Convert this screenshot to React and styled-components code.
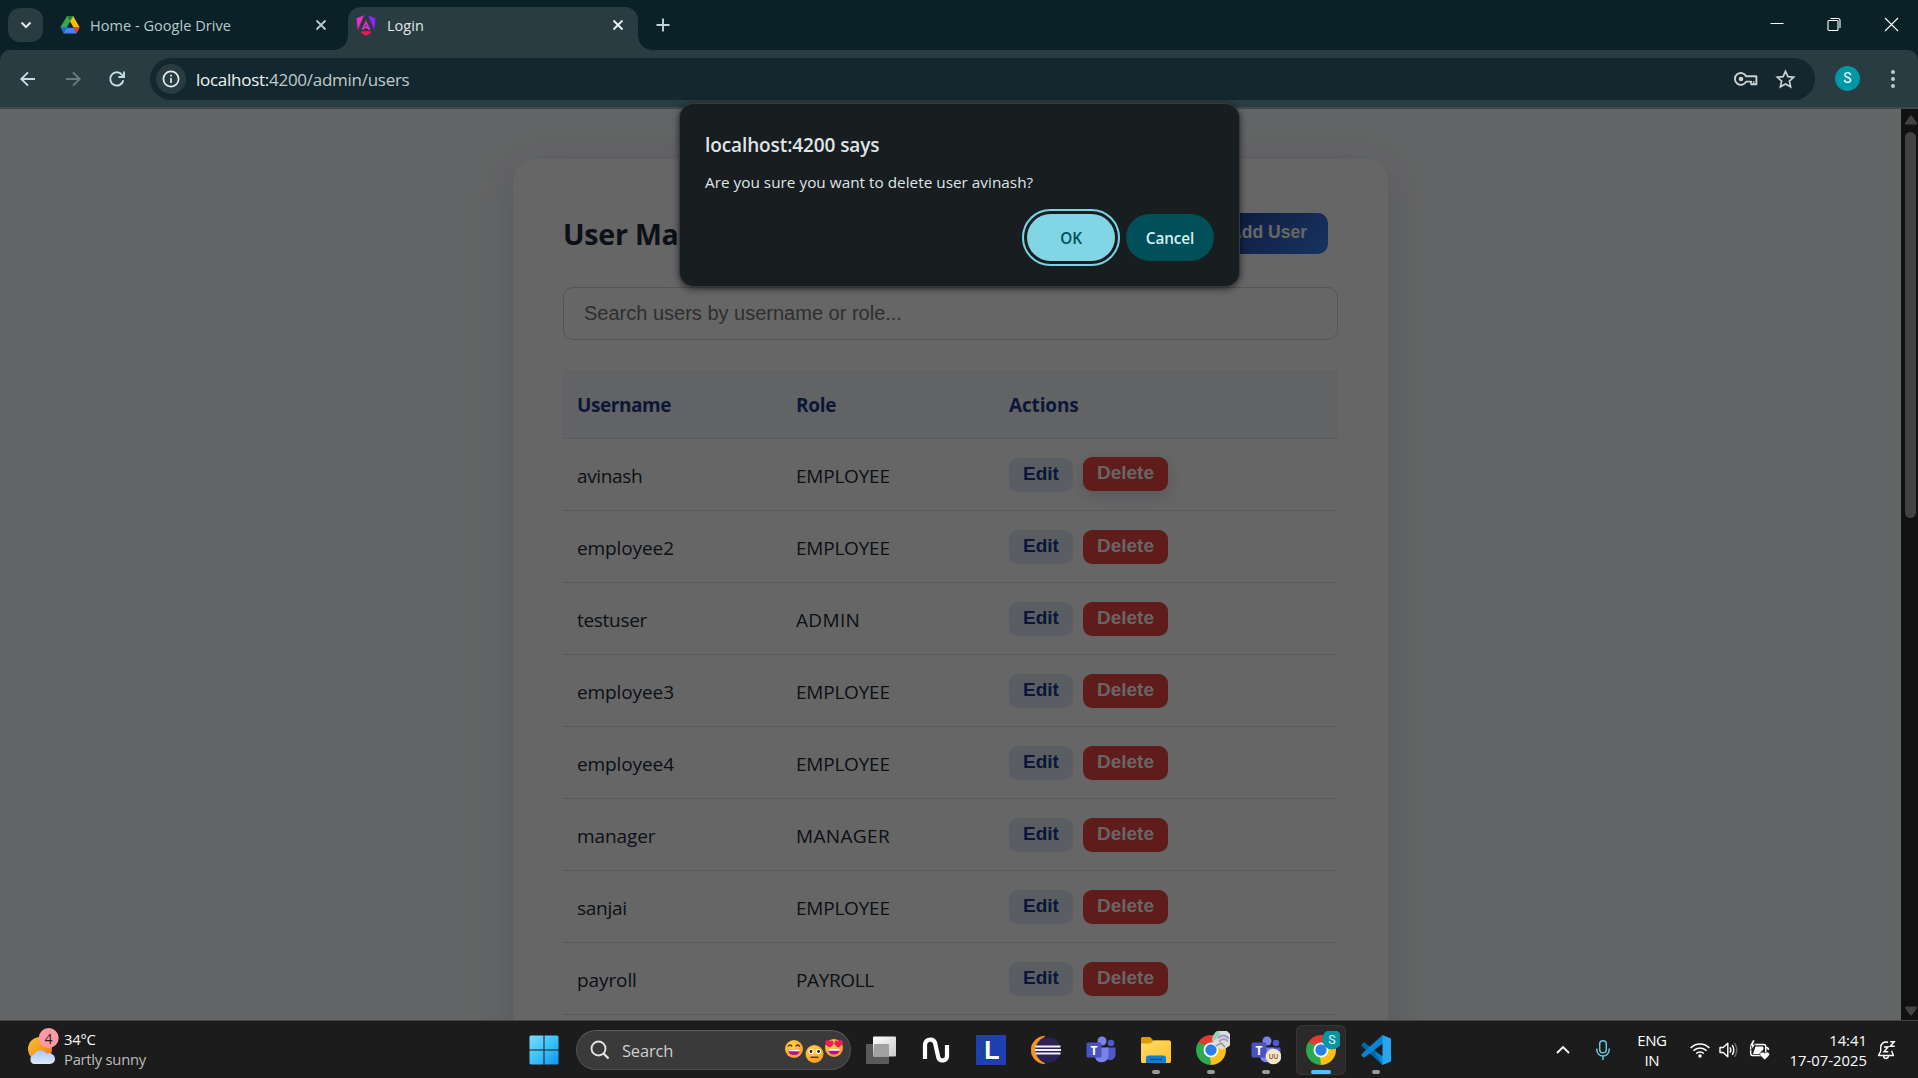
import React from "react";
import styled, { createGlobalStyle, css } from "styled-components";

const ui = `"Open Sans", "Noto Sans", sans-serif`;
const arial = `"Liberation Sans", Arial, sans-serif`;

const GlobalStyle = createGlobalStyle`
  * { box-sizing: border-box; }
  html, body { margin: 0; padding: 0; overflow: hidden; background: #1c1c1c; }
  button, input { margin: 0; border: 0; }
  svg { display: block; flex: none; }
`;

const Screen = styled.div`
  width: 1918px;
  height: 1078px;
  display: flex;
  flex-direction: column;
  overflow: hidden;
  font-family: ${ui};
`;

/* ---------- browser chrome ---------- */

const TabStrip = styled.header`
  height: 50px;
  flex: none;
  display: flex;
  align-items: stretch;
  background: #0a2227;
  padding-left: 8px;
`;

const TabSearch = styled.button`
  width: 35px;
  height: 34px;
  margin-top: 8px;
  padding: 0;
  border-radius: 12px;
  background: #283c42;
  display: flex;
  align-items: center;
  justify-content: center;
`;

const Tab = styled.div`
  position: relative;
  display: flex;
  align-items: center;
  height: 43px;
  margin-top: 7px;
  margin-left: ${(p) => (p.$active ? "0" : "8px")};
  width: ${(p) => (p.$active ? "290px" : "297px")};
  padding: 0 ${(p) => (p.$active ? "14px" : "21px")} 7px ${(p) => (p.$active ? "8px" : "9px")};
  border-radius: 13px 13px 0 0;
  ${(p) =>
    p.$active &&
    css`
      background: #283c42;
      &::before,
      &::after {
        content: "";
        position: absolute;
        bottom: 0;
        width: 14px;
        height: 14px;
      }
      &::before {
        left: -14px;
        background: radial-gradient(circle at 0 0, transparent 13.5px, #283c42 14px);
      }
      &::after {
        right: -14px;
        background: radial-gradient(circle at 100% 0, transparent 13.5px, #283c42 14px);
      }
    `}
`;

const TabTitle = styled.span`
  flex: 1;
  margin-left: ${(p) => (p.$active ? "11px" : "10px")};
  padding-top: 2px;
  font-size: 14.5px;
  line-height: 20px;
  letter-spacing: 0.04px;
  color: ${(p) => (p.$active ? "#e1e6e8" : "#b9cace")};
  white-space: nowrap;
`;

const NewTab = styled.div`
  margin: 18px 0 0 18px;
`;

const WindowControls = styled.div`
  margin-left: auto;
  display: flex;
  gap: 42px;
  padding: 17px 19px 0 0;
`;

const Toolbar = styled.div`
  height: 59px;
  display: flex;
  align-items: center;
  background: #283c42;
  border-radius: 10px 10px 0 0;
  border-bottom: 2px solid #3f4a4e;
  padding: 0 20px 0 18px;
`;

const ToolbarWrap = styled.div`
  background: #0a2227;
  flex: none;
`;

const NavButtons = styled.div`
  display: flex;
  gap: 24.5px;
  width: 132px;
`;

const Omnibox = styled.div`
  width: 1665px;
  height: 42px;
  border-radius: 21px;
  background: #12282e;
  display: flex;
  align-items: center;
  padding: 0 19px 0 6px;
`;

const SiteInfo = styled.div`
  width: 30px;
  height: 30px;
  border-radius: 50%;
  background: #283c42;
  display: flex;
  align-items: center;
  justify-content: center;
`;

const Url = styled.div`
  flex: 1;
  margin-left: 10px;
  padding-top: 2px;
  font-size: 17px;
  line-height: 24px;
  letter-spacing: -0.27px;
  color: #c0cacd;
  white-space: nowrap;
  b {
    font-weight: 400;
    color: #eef3f4;
  }
`;

const OmniActions = styled.div`
  display: flex;
  align-items: center;
  gap: 17px;
  padding-top: 1px;
`;

const Avatar = styled.div`
  width: 25px;
  height: 25px;
  margin-left: 20px;
  border-radius: 50%;
  background: #0097a7;
  color: #fff;
  font: 400 14px/25px Roboto, sans-serif;
  text-align: center;
`;

const MenuDots = styled.div`
  display: flex;
  flex-direction: column;
  gap: 3px;
  margin-left: 30.5px;
  i {
    width: 4px;
    height: 4px;
    border-radius: 50%;
    background: #b9ccd1;
  }
`;

/* ---------- page ---------- */

const Viewport = styled.main`
  position: relative;
  flex: 1;
  min-height: 0;
  display: flex;
`;

const Page = styled.div`
  position: relative;
  flex: 1;
  overflow: hidden;
  background: #f8fafc;
  display: flex;
  justify-content: center;
  align-items: flex-start;
  padding-top: 50px;
`;

const Scrim = styled.div`
  position: absolute;
  inset: 0;
  background: rgba(0, 0, 0, 0.6);
`;

const Card = styled.section`
  width: 875px;
  height: 1200px;
  background: #fff;
  border-radius: 22px;
  box-shadow: 0 10px 40px rgba(30, 41, 100, 0.14);
  padding: 50px 50px 0;
  flex: none;
`;

const CardHead = styled.div`
  display: flex;
  justify-content: space-between;
  align-items: center;
  height: 50px;
  padding-right: 10px;
`;

const Heading = styled.h1`
  margin: 0;
  font-size: 28.5px;
  line-height: 40px;
  font-weight: 700;
  letter-spacing: -0.2px;
  color: #1e293b;
`;

const AddButton = styled.button`
  height: 41px;
  margin-bottom: 1px;
  padding: 0 21px 3px;
  border-radius: 10px;
  background: linear-gradient(135deg, #1e3a8a 0%, #3b82f6 100%);
  color: #fff;
  font: 700 17.5px/22px ${arial};
`;

const SearchInput = styled.input`
  display: block;
  width: 775px;
  height: 53px;
  margin-top: 28px;
  padding: 0 20px;
  border: 1px solid #cbd5e1;
  border-radius: 10px;
  background: #fff;
  font: 400 20px ${arial};
  &::placeholder {
    color: #757575;
    opacity: 1;
  }
`;

const Table = styled.div`
  margin-top: 30px;
`;

const Row = styled.div`
  display: grid;
  grid-template-columns: 219px 213px 1fr;
  align-items: center;
  height: ${(p) => (p.$head ? "69px" : "72px")};
  padding-left: 14px;
  border-bottom: 1px solid #d9e0ea;
  background: ${(p) => (p.$head ? "#f5f8fc" : "transparent")};
`;

const HeadCell = styled.div`
  font-size: 19px;
  line-height: 26px;
  padding-top: 2px;
  font-weight: 700;
  color: #1e3a8a;
  letter-spacing: ${(p) => p.$ls || "-0.3px"};
`;

const Cell = styled.div`
  font-size: 19px;
  line-height: 26px;
  padding-top: 3px;
  color: #222b38;
  letter-spacing: ${(p) => p.$ls}px;
`;

const Actions = styled.div`
  display: flex;
  gap: 10px;
`;

const ActionButton = styled.button`
  height: 34px;
  width: ${(p) => (p.$danger ? "85px" : "64px")};
  padding: 0 0 1px;
  border-radius: 9px;
  font: 700 19px/22px ${arial};
  background: ${(p) => (p.$danger ? "#ef4444" : "#e2ecf5")};
  color: ${(p) => (p.$danger ? "#fff" : "#1e3a8a")};
  ${(p) =>
    p.$hover &&
    css`
      transform: translateY(-1px);
      box-shadow: 0 5px 15px rgba(30, 58, 138, 0.2);
    `}
`;

const Scrollbar = styled.div`
  width: 17px;
  background: #111111;
  display: flex;
  flex-direction: column;
  align-items: center;
  padding: 6px 0 4px 2px;
`;

const Thumb = styled.div`
  width: 11px;
  height: 386px;
  margin: 7px 0 auto;
  border-radius: 6px;
  background: #424242;
`;

/* ---------- dialog ---------- */

const Dialog = styled.div`
  position: absolute;
  left: 680px;
  top: -5px;
  width: 559px;
  height: 182px;
  border-radius: 14px;
  background: #181d1f;
  box-shadow: 0 0 0 1px #343b3e, 0 2px 7px 1px rgba(0, 0, 0, 0.6);
  padding: 27px 25px 25px;
  display: flex;
  flex-direction: column;
`;

const DialogTitle = styled.div`
  font-size: 19px;
  line-height: 28px;
  font-weight: 600;
  letter-spacing: -0.1px;
  color: #dfe6e8;
  white-space: nowrap;
`;

const DialogText = styled.div`
  margin-top: 12px;
  font-size: 15.3px;
  line-height: 22px;
  letter-spacing: 0.02px;
  color: #dfe6e8;
  white-space: nowrap;
`;

const DialogActions = styled.div`
  margin-top: auto;
  display: flex;
  justify-content: flex-end;
  gap: 11px;
`;

const PillButton = styled.button`
  width: 88px;
  height: 47px;
  padding: 1px 0 0;
  border-radius: 24px;
  font: 600 15.3px/22px ${ui};
  letter-spacing: -0.1px;
  background: ${(p) => (p.$primary ? "#82d5e4" : "#004f59")};
  color: ${(p) => (p.$primary ? "#004f59" : "#d5f1f6")};
  ${(p) => p.$primary && "outline: 2px solid #7ad3e5; outline-offset: 3px;"}
`;

/* ---------- taskbar ---------- */

const Taskbar = styled.footer`
  height: 58px;
  flex: none;
  display: flex;
  align-items: stretch;
  background: #1c1c1c;
  border-top: 1px solid #434343;
`;

const Weather = styled.div`
  width: 519px;
  display: flex;
  padding: 6px 0 0 26px;
  gap: 2px;
`;

const Lines = styled.div`
  font-size: ${(p) => p.$size || "14.8px"};
  line-height: 20px;
  padding-top: ${(p) => p.$drop || "0"};
  letter-spacing: ${(p) => p.$ls || "-0.1px"};
  color: #fff;
  text-align: ${(p) => p.$align || "left"};
  white-space: nowrap;
  span {
    display: block;
  }
  span + span {
    color: ${(p) => p.$second || "#fff"};
  }
`;

const AppCell = styled.div`
  position: relative;
  width: 50px;
  height: 50px;
  margin-top: 4px;
  border-radius: 6px;
  display: flex;
  align-items: center;
  justify-content: center;
  flex: none;
  ${(p) => p.$active && "background: #2a2a2a; box-shadow: inset 0 0 0 1px #353535;"}
  &::after {
    content: "";
    display: ${(p) => (p.$running || p.$active ? "block" : "none")};
    position: absolute;
    bottom: 1px;
    left: ${(p) => (p.$active ? "15px" : "21px")};
    width: ${(p) => (p.$active ? "20px" : "8px")};
    height: 4px;
    border-radius: 2px;
    background: ${(p) => (p.$active ? "#4cc2ff" : "#9a9a9a")};
  }
`;

const Apps = styled.div`
  display: flex;
  gap: 5px;
  margin-left: 5px;
`;

const TaskSearch = styled.div`
  width: 275px;
  height: 40px;
  margin: 9px 0 0 7px;
  border-radius: 20px;
  background: #3a3a3a;
  border: 1px solid #505050;
  border-top-color: #5e5e5e;
  display: flex;
  align-items: center;
  padding: 0 6px 0 13px;
  color: #cfcfcf;
  font-size: 16.5px;
  letter-spacing: -0.2px;
  span {
    flex: 1;
    margin-left: 12px;
  }
`;

const Tray = styled.div`
  margin-left: auto;
  display: flex;
  align-items: center;
  padding-right: 22px;
`;

const TrayItem = styled.div`
  margin-left: ${(p) => p.$gap}px;
`;

/* ---------- icons ---------- */

const Close = ({ color }) => (
  <svg width="12" height="12" viewBox="0 0 12 12" stroke={color} strokeWidth="1.8">
    <path d="M1.5 1.5l9 9M10.5 1.5l-9 9" />
  </svg>
);

const DriveIcon = () => (
  <svg width="20" height="18" viewBox="0 0 20 18">
    <path d="M7 0h6.500L10 6.200 6.600 12H.8L.5 11z" fill="#34a853" />
    <path d="M7 0h6.200l6.500 11.600h-6.300z" fill="#fbbc04" />
    <path d="M7 0h6.200L10 5.600z" fill="#188038" />
    <path d="M.5 11.600h6.300l-3.200 5.800z" fill="#1967d2" />
    <path d="M6.600 11.600h6.800l3.100 5.900H3.600z" fill="#4285f4" />
    <path d="M13.300 11.600h6.400l-3.300 5.800z" fill="#ea4335" />
    <path d="M10 6.200l3 5.400H7z" fill="#0a2227" />
  </svg>
);

const AngularIcon = () => (
  <svg width="20" height="21" viewBox="0 0 20 21">
    <defs>
      <linearGradient id="ng" x1="0" y1="0.4" x2="1" y2="0">
        <stop offset="0" stopColor="#f0289c" />
        <stop offset="0.45" stopColor="#e62fd8" />
        <stop offset="1" stopColor="#c026d3" />
      </linearGradient>
    </defs>
    <path d="M8 0.300L0.500 3.200l1.200 11.800z" fill="#ee2bc4" />
    <path d="M12 0.300l7.500 2.900-1.200 11.800z" fill="#8b27f3" />
    <path d="M10 5.200l4.600 9.600h-2.500l-.7-1.600H8.600l-.7 1.600H5.400z" fill="url(#ng)" />
    <path d="M10 9l-1 2.500h2z" fill="#283c42" />
    <path d="M5.200 16.200h9.600v2L10 20.800l-4.800-2.600z" fill="#fa1550" />
  </svg>
);

const Arrow = ({ color, flip }) => (
  <svg width="20" height="20" viewBox="0 0 20 20" fill="none" stroke={color} strokeWidth="1.9">
    <path d={flip ? "M3 10h13M10 3.3L16.7 10 10 16.7" : "M17 10H4M10 3.3L3.3 10l6.7 6.7"} />
  </svg>
);

const Reload = () => (
  <svg width="20" height="20" viewBox="0 0 20 20" fill="none" stroke="#c2dde3" strokeWidth="1.9">
    <path d="M16.300 11.200A6.600 6.600 0 1 1 15 5.800l1.500 1.700" />
    <path d="M17 2.400v5.600h-5.600" />
  </svg>
);

const KeyIcon = () => (
  <svg width="24" height="16" viewBox="0 0 24 16" fill="none" stroke="#cdd0d2" strokeWidth="1.9">
    <path d="M12.100 5.300A5.900 5.900 0 1 0 12.100 10.600H15v0h2.200v2.600h5.200V5.300z" strokeLinejoin="round" />
    <circle cx="7" cy="8" r="2.300" fill="#cdd0d2" stroke="none" />
    <path d="M19.800 10v3" strokeWidth="1.200" />
  </svg>
);

const StarIcon = () => (
  <svg width="21" height="20" viewBox="0 0 21 20" fill="none" stroke="#cdd0d2" strokeWidth="1.700">
    <path d="M10.500 2.300l2.400 5.300 5.800.6-4.300 3.900 1.200 5.700-5.100-2.900-5.100 2.900 1.200-5.700-4.300-3.900 5.800-.6z" />
  </svg>
);

const WeatherIcon = () => (
  <svg width="36" height="40" viewBox="0 0 36 40">
    <defs>
      <linearGradient id="sun" x1="0" y1="0" x2="1" y2="1">
        <stop offset="0" stopColor="#f7c531" />
        <stop offset="1" stopColor="#f07316" />
      </linearGradient>
      <linearGradient id="cloud" x1="0" y1="0" x2="0" y2="1">
        <stop offset="0" stopColor="#a9c6f7" />
        <stop offset="1" stopColor="#dfeafb" />
      </linearGradient>
    </defs>
    <circle cx="14" cy="22" r="12" fill="url(#sun)" />
    <path d="M8.500 37a4.700 4.700 0 0 1-.6-9.200c1.300-5.600 10.200-6.400 12.600-1 4.500-1.600 8.500 1.400 8.500 5.200a5 5 0 0 1-5 5z" fill="url(#cloud)" />
    <circle cx="22.700" cy="11" r="10" fill="#ff99a4" />
    <text x="22.500" y="16.500" fontSize="14" textAnchor="middle" fontFamily="Open Sans" fill="#222">4</text>
  </svg>
);

const WindowsIcon = () => (
  <svg width="30" height="30" viewBox="0 0 30 30">
    <defs>
      <linearGradient id="win" gradientUnits="userSpaceOnUse" x1="0" y1="0" x2="30" y2="30">
        <stop offset="0" stopColor="#7fdcff" />
        <stop offset="0.500" stopColor="#3cc2fb" />
        <stop offset="1" stopColor="#0a94f7" />
      </linearGradient>
    </defs>
    <path d="M1.500 0.500H14.500V14.500H0.500V1.500zM15.500 0.500H28.500L29.500 1.500V14.500H15.500zM0.500 15.500H14.500V29.500H1.500L.5 28.500zM15.500 15.500H29.500V28.500L28.500 29.500H15.500z" fill="url(#win)" />
  </svg>
);

const Emojis = () => (
  <svg width="60" height="28" viewBox="0 0 60 28">
    <defs>
      <radialGradient id="face" cx="0.4" cy="0.3" r="0.8">
        <stop offset="0" stopColor="#ffd84a" />
        <stop offset="1" stopColor="#f59322" />
      </radialGradient>
    </defs>
    <circle cx="10" cy="13" r="9" fill="url(#face)" />
    <path d="M4 10.500q2-3 4.300 0M11.600 10.500q2-3 4.300 0" stroke="#5b2a18" strokeWidth="1.300" fill="none" />
    <path d="M4 13.500h12q-.5 5.500-6 5.500t-6-5.500z" fill="#b3128a" />
    <path d="M4.300 13.500h11.400v1.700H4.600z" fill="#fff" />
    <circle cx="30.500" cy="18" r="9" fill="url(#face)" />
    <circle cx="27" cy="15.500" r="2.600" fill="#fff" />
    <circle cx="34.500" cy="15.500" r="2.600" fill="#fff" />
    <circle cx="27" cy="15.500" r="1.400" fill="#3a1a14" />
    <circle cx="34.500" cy="15.500" r="1.400" fill="#3a1a14" />
    <path d="M26.500 21.300h8" stroke="#6b321c" strokeWidth="1.500" />
    <circle cx="50" cy="12" r="9" fill="url(#face)" />
    <path d="M44 13h12q-.5 5.500-6 5.500T44 13z" fill="#b3128a" />
    <path d="M44.300 13h11.400v1.700H44.600z" fill="#fff" />
    <path d="M45.500 11.500c-5-2.500-5.500-7-2.500-7.500 1.300-.2 2.200.6 2.600 1.500.8-.9 2-1.300 3.100-.6 2.300 1.600.3 5.300-3.200 6.600zM54.500 11.500c5-2.500 5.500-7 2.500-7.500-1.300-.2-2.200.6-2.600 1.500-.8-.9-2-1.300-3.100-.6-2.300 1.600-.3 5.300 3.200 6.600z" fill="#ee1c5a" />
  </svg>
);

const TaskViewIcon = () => (
  <svg width="30" height="28" viewBox="0 0 30 28">
    <defs>
      <linearGradient id="tv" x1="0" y1="0" x2="1" y2="1">
        <stop offset="0" stopColor="#fff" />
        <stop offset="1" stopColor="#c9c9c9" />
      </linearGradient>
    </defs>
    <rect x="0" y="8" width="23" height="20" rx="1" fill="#5a5a5a" />
    <rect x="7" y="0.500" width="23" height="20" rx="1" fill="url(#tv)" />
    <path d="M8 8h14a1 1 0 0 1 1 1v11.500H8a1 1 0 0 1-1-1z" fill="#a2a2a2" />
  </svg>
);

const WaveIcon = () => (
  <svg width="28" height="28" viewBox="0 0 28 28" fill="none" stroke="#fff" strokeWidth="4.200">
    <path d="M3 23V8.500A5.300 5.300 0 0 1 13 6.500L16.300 21.500A4.500 4.500 0 0 0 25 20.500V9" />
  </svg>
);

const LBlock = styled.div`
  width: 30px;
  height: 30px;
  background: #1e40b0;
  color: #fff;
  font: 700 25px/30px ${arial};
  text-align: center;
  padding-left: 2px;
  text-shadow: -2px 1px 0 #0b5061;
`;

const EclipseIcon = () => (
  <svg width="30" height="30" viewBox="0 0 30 30">
    <path d="M14 1.200A13.800 13.800 0 0 0 14 28.800A15.500 15.500 0 0 1 14 1.200z" fill="#f7941e" stroke="#f7941e" strokeWidth="0.800" />
    <circle cx="17" cy="15" r="12.700" fill="#2c2255" />
    <path d="M4.500 11.500h25M4 15h26M4.500 18.500h25" stroke="#f2f0f7" strokeWidth="2" />
  </svg>
);

const TeamsIcon = ({ badge }) => (
  <svg width="30" height="30" viewBox="0 0 30 30">
    <circle cx="25" cy="8" r="3.300" fill="#5059c9" />
    <path d="M20 12.500h9.500V20a5.500 5.500 0 0 1-8 4.500z" fill="#5059c9" />
    <circle cx="16" cy="6" r="4.500" fill="#7b83eb" />
    <path d="M9 12.500h13.500v9a7 7 0 0 1-13.500 1z" fill="#7b83eb" />
    <rect x="0.500" y="7.500" width="15" height="15" rx="1.500" fill="#4b53bc" />
    <text x="8" y="19.500" textAnchor="middle" fontFamily="Open Sans" fontWeight="700" fontSize="12" fill="#fff">T</text>
    {badge && (
      <>
        <circle cx="22.500" cy="21.500" r="7.800" fill="#f6e6c8" />
        <text x="22.500" y="24.200" textAnchor="middle" fontFamily="Open Sans" fontWeight="600" fontSize="6.500" fill="#6b4a2a">UU</text>
      </>
    )}
  </svg>
);

const FolderIcon = () => (
  <svg width="30" height="28" viewBox="0 0 30 28">
    <defs>
      <linearGradient id="fold" x1="0" y1="0" x2="1" y2="1">
        <stop offset="0" stopColor="#ffdc6b" />
        <stop offset="1" stopColor="#fbc02a" />
      </linearGradient>
    </defs>
    <path d="M0 2.500A1.500 1.500 0 0 1 1.500 1H9l3.500 3.500H28a1.500 1.500 0 0 1 1.500 1.500V12H0z" fill="#dd9a0a" />
    <path d="M0 7.500h9.500L13 4.500h15.500A1.500 1.500 0 0 1 30 6v19.500a1.500 1.500 0 0 1-1.500 1.500h-27A1.500 1.500 0 0 1 0 25.500z" fill="url(#fold)" />
    <path d="M5 27v-5a2.500 2.500 0 0 1 2.500-2.500h15A2.500 2.500 0 0 1 25 22v5z" fill="#0f7fd6" />
    <path d="M9 23.500h12" stroke="#0a4f8f" strokeWidth="1.300" />
  </svg>
);

const ChromeIcon = ({ badge }) => (
  <svg width="38" height="38" viewBox="0 0 38 38">
    <path d="M19 19L6.010 11.500A15 15 0 0 1 31.990 11.500z" fill="#e33b2e" />
    <path d="M19 19L31.990 11.500A15 15 0 0 1 19 34z" fill="#fbc116" />
    <path d="M19 19L19 34A15 15 0 0 1 6.010 11.500z" fill="#2da94f" />
    <path d="M19 11.500H31.990L25 16z" fill="#e33b2e" />
    <path d="M25.500 22.700L19 34 18 25z" fill="#fbc116" />
    <path d="M12.500 22.700L6.010 11.500 14 14z" fill="#2da94f" />
    <circle cx="19" cy="19" r="7.500" fill="#fff" />
    <circle cx="19" cy="19" r="5.700" fill="#2b7de9" />
    {badge === "S" ? (
      <>
        <circle cx="30" cy="8.500" r="10" fill="#0b93a0" />
        <text x="30" y="13" textAnchor="middle" fontFamily="Roboto" fontSize="12.500" fill="#d9f5f8">S</text>
      </>
    ) : (
      <>
        <circle cx="30" cy="8.500" r="9.700" fill="#dcdcd8" />
        <path d="M20.800 11A9.700 9.700 0 0 1 27 -0.500l1 5.500-4 3z" fill="#8fd3bd" />
        <path d="M26 7.500q5-6 11 0M27 10.500q5-5 9 0" stroke="#a996cf" strokeWidth="1.800" fill="none" />
        <path d="M24 15l5-3 4 4" stroke="#8a8a86" strokeWidth="1.300" fill="none" />
      </>
    )}
  </svg>
);

const VSCodeIcon = () => (
  <svg width="30" height="30" viewBox="0 0 30 30">
    <path d="M3 7.200L0.600 9.200v1.700L21.500 30l.8-8.200z" fill="#0069ae" />
    <path d="M3 22.800L0.600 20.800v-1.700L21.500 0l.8 8.200z" fill="#0b84d3" />
    <path d="M14 17.500L21.500 30l.8-8.200z" fill="#0b84d3" />
    <path d="M21.500 0L30 3.500v23L21.500 30z" fill="#27a5f2" />
  </svg>
);

const WifiIcon = () => (
  <svg width="20" height="16" viewBox="0 0 20 16" fill="none" stroke="#fff" strokeWidth="1.500">
    <path d="M.6 6a13 13 0 0 1 18.800 0M3.400 8.800a9.200 9.200 0 0 1 13.200 0M6.200 11.600a5.300 5.300 0 0 1 7.600 0" />
    <circle cx="10" cy="14" r="1.700" fill="#fff" stroke="none" />
  </svg>
);

const SpeakerIcon = () => (
  <svg width="21" height="18" viewBox="0 0 21 18" fill="none" stroke="#fff" strokeWidth="1.400">
    <path d="M1 6.500h3.200L8.800 2.300v13.400L4.200 11.500H1z" strokeLinejoin="round" />
    <path d="M11 6.300q1.700 2.700 0 5.400M13.200 4.200q3.200 4.800 0 9.600" />
    <path d="M15.500 2.200q4.600 6.800 0 13.600" stroke="#6a6a6a" />
  </svg>
);

const BatteryIcon = () => (
  <svg width="21" height="20" viewBox="0 0 21 20">
    <rect x="1.700" y="4.500" width="15" height="11" rx="2" fill="none" stroke="#fff" strokeWidth="1.500" />
    <path d="M17 7.500q2.500 0 2.500 2.500" stroke="#fff" strokeWidth="1.500" fill="none" />
    <path d="M6.500 6.500H14q1.500 3-1.500 4.500l-2 3H4z" fill="#fff" />
    <path d="M3.800 0L.5 6h2.300L1.800 10.500 6.300 4.500H4.200L6 0z" fill="#fff" stroke="#1c1c1c" strokeWidth="0.600" />
    <path d="M15.700 20l-4.200-4.200c-2-2.400 1.500-5.200 4.200-2.700 2.700-2.500 6.200.3 4.200 2.700z" fill="#fff" stroke="#1c1c1c" strokeWidth="0.600" />
  </svg>
);

const BellIcon = () => (
  <svg width="19" height="20" viewBox="0 0 19 20" fill="none" stroke="#fff" strokeWidth="1.400">
    <path d="M11 2.200C6.500 1.200 3.700 4 3.700 7.500v3.800L1.500 15.500h15L15 12.300v-1.500" strokeLinejoin="round" />
    <path d="M6.500 16q.5 2.500 2.500 2.500t2.500-2.500" />
    <path d="M7 7h4l-4 4.800h4.300M13.200 1.700h4l-4 4.500h4.500" />
  </svg>
);

/* ---------- data: name, name tracking, role, role tracking ---------- */

const users = [
  ["avinash", -0.35, "EMPLOYEE", -0.22],
  ["employee2", -0.1, "EMPLOYEE", -0.22],
  ["testuser", -0.3, "ADMIN", 0.35],
  ["employee3", -0.1, "EMPLOYEE", -0.22],
  ["employee4", -0.1, "EMPLOYEE", -0.22],
  ["manager", -0.1, "MANAGER", 0.35],
  ["sanjai", -0.25, "EMPLOYEE", -0.22],
  ["payroll", -0.1, "PAYROLL", -0.38],
];

export default function App() {
  return (
    <Screen>
      <GlobalStyle />
      <TabStrip>
        <TabSearch>
          <svg width="12" height="8" viewBox="0 0 12 8" fill="none" stroke="#e4eaec" strokeWidth="2">
            <path d="M1.500 1.500L6 6l4.500-4.500" />
          </svg>
        </TabSearch>
        <Tab>
          <DriveIcon />
          <TabTitle>Home - Google Drive</TabTitle>
          <Close color="#b9cace" />
        </Tab>
        <Tab $active>
          <AngularIcon />
          <TabTitle $active>Login</TabTitle>
          <Close color="#eef3f4" />
        </Tab>
        <NewTab>
          <svg width="14" height="14" viewBox="0 0 14 14" stroke="#c2d3d7" strokeWidth="1.900">
            <path d="M7 .5v13M.5 7h13" />
          </svg>
        </NewTab>
        <WindowControls>
          <svg width="15" height="14" viewBox="0 0 15 14" stroke="#fff" strokeWidth="1">
            <path d="M.5 6.500h13" />
          </svg>
          <svg width="15" height="15" viewBox="0 0 15 15" fill="none" stroke="#fff" strokeWidth="1.100">
            <rect x="1" y="3.500" width="10" height="10" rx="1" />
            <path d="M3.500 1.500h7.500a2 2 0 0 1 2 2V11" />
          </svg>
          <svg width="15" height="15" viewBox="0 0 15 15" stroke="#fff" strokeWidth="1.100">
            <path d="M1 1l13 13M14 1L1 14" />
          </svg>
        </WindowControls>
      </TabStrip>

      <ToolbarWrap>
        <Toolbar>
          <NavButtons>
            <Arrow color="#c2dde3" />
            <Arrow color="#687b81" flip />
            <Reload />
          </NavButtons>
          <Omnibox>
            <SiteInfo>
              <svg width="18" height="18" viewBox="0 0 18 18" fill="none" stroke="#e6eaeb" strokeWidth="1.700">
                <circle cx="9" cy="9" r="7.600" />
                <path d="M9 8v5M9 4.800v1.800" />
              </svg>
            </SiteInfo>
            <Url>
              <b>localhost:</b>4200/admin/users
            </Url>
            <OmniActions>
              <KeyIcon />
              <StarIcon />
            </OmniActions>
          </Omnibox>
          <Avatar>S</Avatar>
          <MenuDots>
            <i />
            <i />
            <i />
          </MenuDots>
        </Toolbar>
      </ToolbarWrap>

      <Viewport>
        <Page>
          <Card>
            <CardHead>
              <Heading>User Management</Heading>
              <AddButton>Add User</AddButton>
            </CardHead>
            <SearchInput placeholder="Search users by username or role..." />
            <Table>
              <Row $head>
                <HeadCell $ls="-0.42px">Username</HeadCell>
                <HeadCell>Role</HeadCell>
                <HeadCell $ls="-0.15px">Actions</HeadCell>
              </Row>
              {users.map(([name, nameLs, role, roleLs], i) => (
                <Row key={name}>
                  <Cell $ls={nameLs}>{name}</Cell>
                  <Cell $ls={roleLs}>{role}</Cell>
                  <Actions>
                    <ActionButton>Edit</ActionButton>
                    <ActionButton $danger $hover={i === 0}>
                      Delete
                    </ActionButton>
                  </Actions>
                </Row>
              ))}
            </Table>
          </Card>
          <Scrim />
        </Page>
        <Scrollbar>
          <svg width="12" height="10" viewBox="0 0 12 10">
            <path d="M5.200.8q.8-.8 1.600 0L12 8q.2 1.500-1 1.500H1Q-.2 9.500 0 8z" fill="#424242" />
          </svg>
          <Thumb />
          <svg width="12" height="10" viewBox="0 0 12 10">
            <path d="M5.200 9.200q.8.8 1.600 0L12 2Q12.200.5 11 .5H1Q-.2.5 0 2z" fill="#424242" />
          </svg>
        </Scrollbar>
        <Dialog>
          <DialogTitle>localhost:4200 says</DialogTitle>
          <DialogText>Are you sure you want to delete user avinash?</DialogText>
          <DialogActions>
            <PillButton $primary>OK</PillButton>
            <PillButton>Cancel</PillButton>
          </DialogActions>
        </Dialog>
      </Viewport>

      <Taskbar>
        <Weather>
          <WeatherIcon />
          <Lines $second="#bdbdbd" $ls="-0.27px" $drop="2px">
            <span>34°C</span>
            <span>Partly sunny</span>
          </Lines>
        </Weather>
        <AppCell>
          <WindowsIcon />
        </AppCell>
        <TaskSearch>
          <svg width="20" height="20" viewBox="0 0 20 20" fill="none" stroke="#e2e2e2" strokeWidth="1.900">
            <circle cx="8.500" cy="8.500" r="7" />
            <path d="M13.500 13.500l5 5" strokeWidth="2.400" />
          </svg>
          <span>Search</span>
          <Emojis />
        </TaskSearch>
        <Apps>
          <AppCell>
            <TaskViewIcon />
          </AppCell>
          <AppCell>
            <WaveIcon />
          </AppCell>
          <AppCell>
            <LBlock>L</LBlock>
          </AppCell>
          <AppCell>
            <EclipseIcon />
          </AppCell>
          <AppCell>
            <TeamsIcon />
          </AppCell>
          <AppCell $running>
            <FolderIcon />
          </AppCell>
          <AppCell $running>
            <ChromeIcon />
          </AppCell>
          <AppCell $running>
            <TeamsIcon badge />
          </AppCell>
          <AppCell $active>
            <ChromeIcon badge="S" />
          </AppCell>
          <AppCell $running>
            <VSCodeIcon />
          </AppCell>
        </Apps>
        <Tray>
          <TrayItem $gap={0}>
            <svg width="14" height="9" viewBox="0 0 14 9" fill="none" stroke="#fff" strokeWidth="1.800">
              <path d="M1 8l6-6 6 6" />
            </svg>
          </TrayItem>
          <TrayItem $gap={26}>
            <svg width="14" height="20" viewBox="0 0 14 20" fill="none" stroke="#6cc4dd" strokeWidth="1.500">
              <rect x="3.700" y="0.800" width="6.600" height="12" rx="3.300" />
              <path d="M.8 8.500v1.300a6.200 6.200 0 0 0 12.400 0V8.500M7 16v4" />
            </svg>
          </TrayItem>
          <TrayItem $gap={27}>
            <Lines $align="center" $size="15px" $ls="-0.4px">
              <span>ENG</span>
              <span>IN</span>
            </Lines>
          </TrayItem>
          <TrayItem $gap={23}>
            <WifiIcon />
          </TrayItem>
          <TrayItem $gap={9}>
            <SpeakerIcon />
          </TrayItem>
          <TrayItem $gap={9}>
            <BatteryIcon />
          </TrayItem>
          <TrayItem $gap={20}>
            <Lines $align="right" $ls="0.02px">
              <span>14:41</span>
              <span>17-07-2025</span>
            </Lines>
          </TrayItem>
          <TrayItem $gap={10}>
            <BellIcon />
          </TrayItem>
        </Tray>
      </Taskbar>
    </Screen>
  );
}
